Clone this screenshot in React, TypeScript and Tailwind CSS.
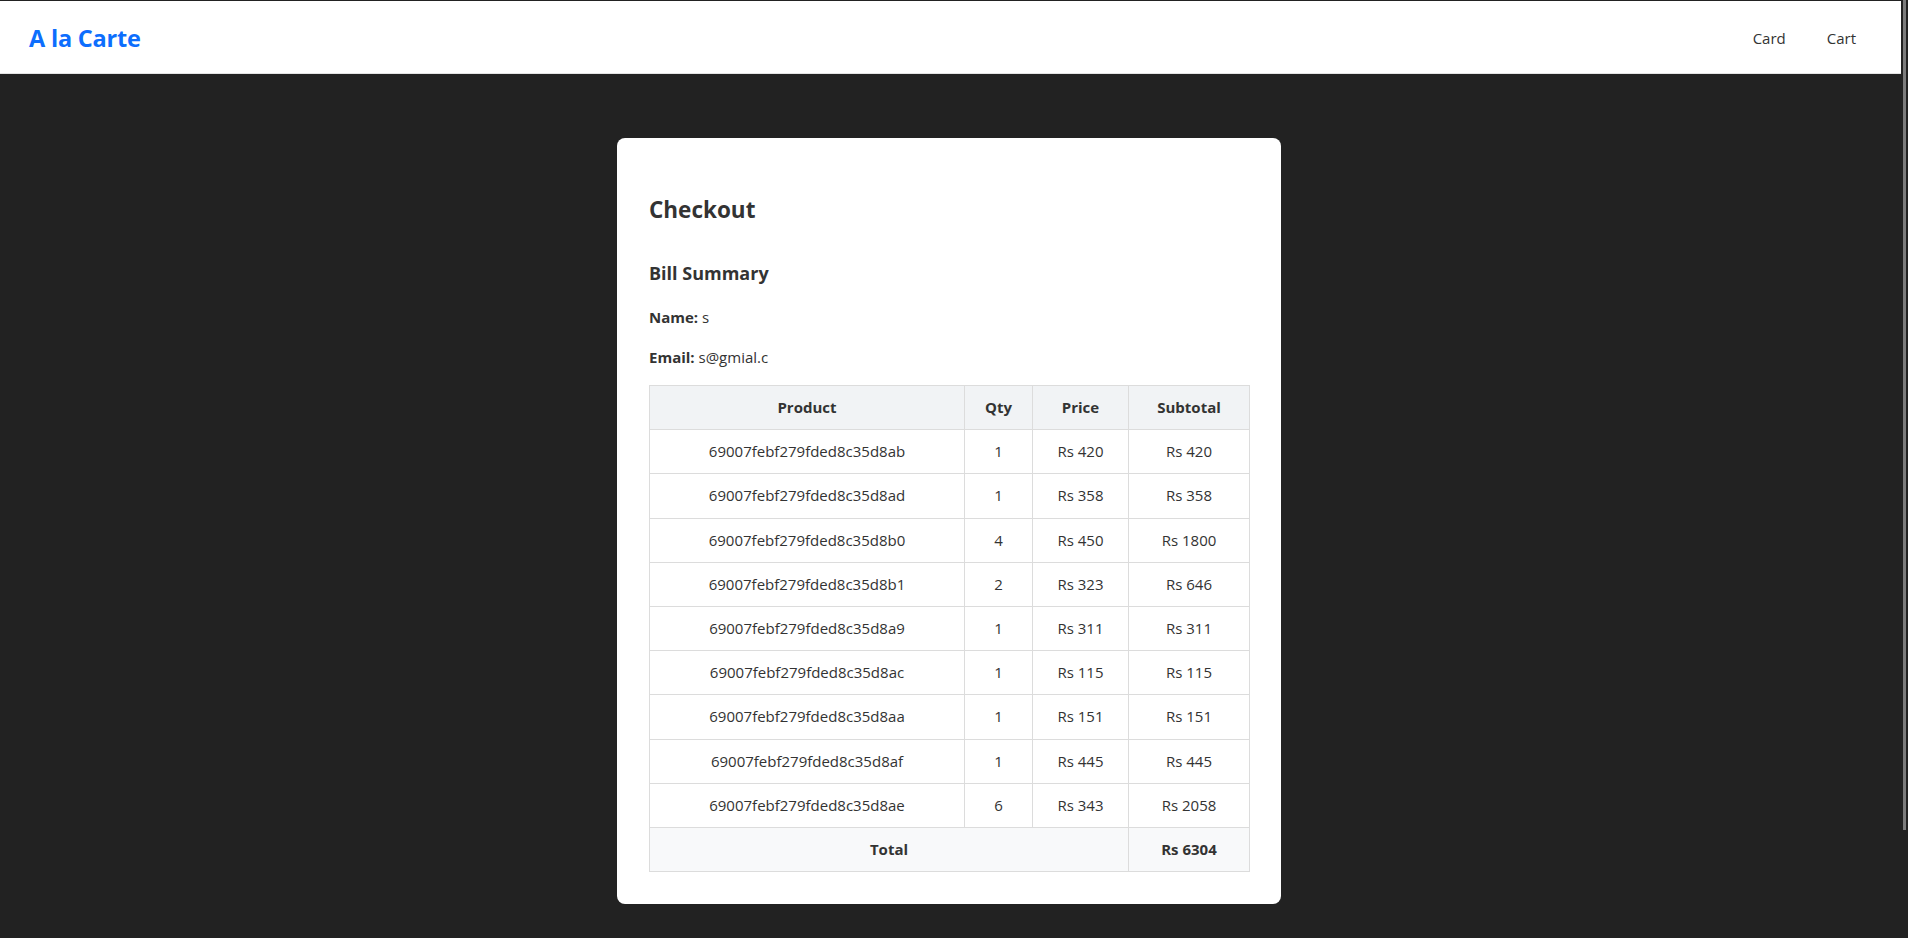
type Line = {
  id: string
  qty: number
  price: number
}

const lines: Line[] = [
  { id: '69007febf279fded8c35d8ab', qty: 1, price: 420 },
  { id: '69007febf279fded8c35d8ad', qty: 1, price: 358 },
  { id: '69007febf279fded8c35d8b0', qty: 4, price: 450 },
  { id: '69007febf279fded8c35d8b1', qty: 2, price: 323 },
  { id: '69007febf279fded8c35d8a9', qty: 1, price: 311 },
  { id: '69007febf279fded8c35d8ac', qty: 1, price: 115 },
  { id: '69007febf279fded8c35d8aa', qty: 1, price: 151 },
  { id: '69007febf279fded8c35d8af', qty: 1, price: 445 },
  { id: '69007febf279fded8c35d8ae', qty: 6, price: 343 },
]

function Navbar() {
  return (
    <nav className="h-[73px] bg-white border-b border-[#e3e3e3] flex items-center justify-between pl-[29px] pr-[45px] pt-[3px]">
      <a className="text-[23.5px] font-bold text-[#0d6efd] tracking-[-0.2px]">A la Carte</a>
      <div className="flex items-center gap-[41px] text-[15px] text-[#333]">
        <a>Card</a>
        <a>Cart</a>
      </div>
    </nav>
  )
}

export default function App() {
  const total = lines.reduce((sum, l) => sum + l.qty * l.price, 0)

  return (
    <div className="min-h-screen bg-[#222] flex" style={{ fontFamily: '"Open Sans", "Noto Sans", sans-serif' }}>
      <div className="flex-1 flex flex-col">
        <div className="h-px bg-[#222]" />
        <Navbar />

        <div className="pr-[3px]">
          <div className="w-[664px] mx-auto mt-[64px] bg-white rounded-lg px-8 pt-8 pb-8 text-[#333]">
            <h2 className="mt-[25px] text-[22.5px] leading-[29px] font-bold">Checkout</h2>
            <h3 className="mt-[37px] text-[18px] leading-6 font-bold">Bill Summary</h3>
            <p className="mt-[20px] text-[15px] leading-6">
              <span className="font-bold">Name:</span> s
            </p>
            <p className="mt-4 text-[15px] leading-6">
              <span className="font-bold">Email:</span> s@gmial.c
            </p>

            <table className="mt-4 w-[600px] table-fixed border-collapse text-[15px] text-center">
              <thead>
                <tr className="bg-[#f1f3f5]">
                  <th className="w-[315px] border border-[#dcdcdc] py-[10px] leading-[23.2px] font-bold">Product</th>
                  <th className="w-[68px] border border-[#dcdcdc] py-[10px] leading-[23.2px] font-bold">Qty</th>
                  <th className="w-[96px] border border-[#dcdcdc] py-[10px] leading-[23.2px] font-bold">Price</th>
                  <th className="w-[121px] border border-[#dcdcdc] py-[10px] leading-[23.2px] font-bold">Subtotal</th>
                </tr>
              </thead>
              <tbody>
                {lines.map((l) => (
                  <tr key={l.id}>
                    <td className="border border-[#dcdcdc] py-[10px] leading-[23.2px]">{l.id}</td>
                    <td className="border border-[#dcdcdc] py-[10px] leading-[23.2px]">{l.qty}</td>
                    <td className="border border-[#dcdcdc] py-[10px] leading-[23.2px]">Rs {l.price}</td>
                    <td className="border border-[#dcdcdc] py-[10px] leading-[23.2px]">Rs {l.qty * l.price}</td>
                  </tr>
                ))}
                <tr className="bg-[#f8f9fa]">
                  <td colSpan={3} className="border border-[#dcdcdc] py-[10px] leading-[23.2px] font-bold">Total</td>
                  <td className="border border-[#dcdcdc] py-[10px] leading-[23.2px] font-bold">Rs {total}</td>
                </tr>
              </tbody>
            </table>
          </div>
        </div>
      </div>

      <div className="w-[7px] pl-[2px]">
        <div className="w-[3px] h-[830px] bg-[#7c7c7c]" />
      </div>
    </div>
  )
}
